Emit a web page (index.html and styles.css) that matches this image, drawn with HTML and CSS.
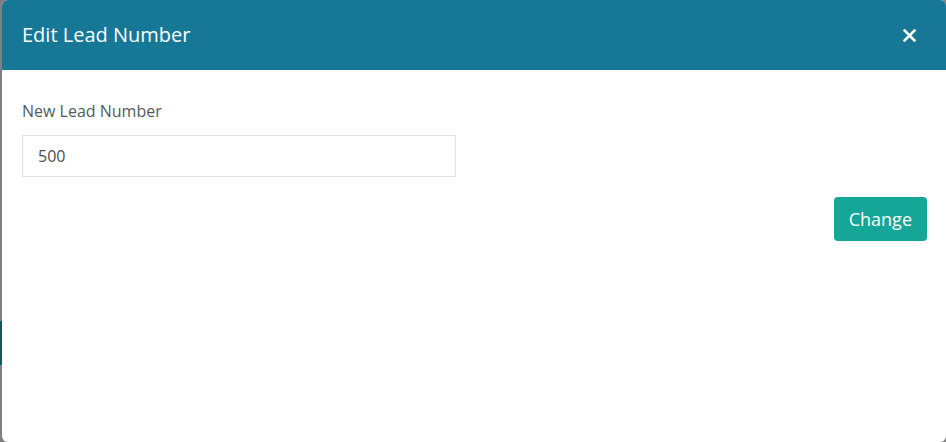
FILE: index.html
```html
<!DOCTYPE html>
<html lang="en">
<head>
    <meta charset="UTF-8">
    <meta name="viewport" content="width=device-width, initial-scale=1.0">
    <title>Edit Lead Number</title>
    <link rel="stylesheet" href="styles.css">
</head>
<body>
    <div class="backdrop">
        <div class="page-edge">
            <div class="page-edge-tab"></div>
        </div>
        <div class="modal">
            <div class="modal-header">
                <h1>Edit Lead Number</h1>
                <button class="close-button" aria-label="Close">
                    <svg width="13" height="13" viewBox="0 0 13 13">
                        <path d="M1.5 1.5 L11.5 11.5 M11.5 1.5 L1.5 11.5" stroke="#fff" stroke-width="2.6" stroke-linecap="square"/>
                    </svg>
                </button>
            </div>
            <div class="modal-body">
                <label for="leadNumber">New Lead Number</label>
                <input type="text" id="leadNumber" value="500">
                <div class="actions">
                    <button class="change-button">Change</button>
                </div>
            </div>
        </div>
    </div>
</body>
</html>
```

FILE: styles.css
```css
body {
    margin: 0;
    padding: 0;
    font-family: "Open Sans", Arial, sans-serif;
    background-color: #808080;
    overflow: hidden;
}

.backdrop {
    display: flex;
    height: 442px;
}

.page-edge {
    width: 2px;
    padding-top: 321px;
}

.page-edge-tab {
    height: 44px;
    background-color: #0d5c58;
}

.modal {
    width: 944px;
    height: 442px;
    background-color: #fff;
    border-radius: 6px;
    overflow: hidden;
}

.modal-header {
    height: 70px;
    background-color: #177797;
    display: flex;
    align-items: center;
    justify-content: space-between;
    padding: 0 30px 0 20px;
}

.modal-header h1 {
    margin: 0;
    font-size: 20px;
    font-weight: 400;
    color: #fff;
    padding-bottom: 2px;
}

.close-button {
    background: none;
    border: none;
    padding: 0;
    width: 13px;
    height: 13px;
    display: flex;
    cursor: pointer;
}

.modal-body {
    padding: 30px 19px 0 20px;
    display: flex;
    flex-direction: column;
}

.modal-body label {
    font-size: 16px;
    color: #535a61;
    line-height: 22px;
    margin-bottom: 13px;
}

.modal-body input {
    width: 434px;
    height: 42px;
    box-sizing: border-box;
    border: 1px solid #dee2e6;
    border-radius: 0;
    padding: 0 15px;
    font-family: "Open Sans", Arial, sans-serif;
    font-size: 16px;
    color: #495057;
    outline: none;
}

.actions {
    display: flex;
    justify-content: flex-end;
    margin-top: 20px;
}

.change-button {
    background-color: #16a697;
    color: #fff;
    border: none;
    border-radius: 4px;
    height: 44px;
    padding: 0 15px;
    font-family: "Open Sans", Arial, sans-serif;
    font-size: 18px;
    cursor: pointer;
}
```
